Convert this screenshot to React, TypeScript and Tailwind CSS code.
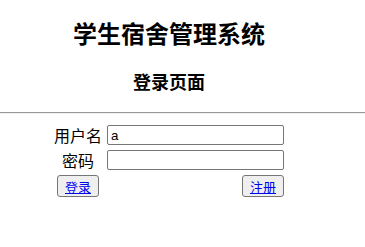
export default function App() {
  const cjk = "font-['Microsoft_YaHei','Noto_Sans_CJK_SC',sans-serif]";
  return (
    <div className={`min-h-[247px] w-[365px] bg-white text-black ${cjk}`}>
      <div className="flex w-[338px] flex-col items-center pt-[21px]">
        <h1 className="text-[24px] font-bold leading-[24px]">学生宿舍管理系统</h1>
        <h2 className="mt-[27px] text-[18px] font-bold leading-[18px]">登录页面</h2>
      </div>
      <hr className="mt-[22px] h-0 border-0 border-t border-b border-t-[#9a9a9a] border-b-[#eeeeee]" />
      <div className="flex w-[338px] justify-center pt-[11px]">
        <form className="grid grid-cols-[48px_177px] gap-x-[5px] gap-y-[5px]">
          <label className="flex h-[20px] items-center justify-center text-[16px] leading-none">用户名</label>
          <input
            type="text"
            defaultValue="a"
            className="h-[20px] w-[177px] rounded-[2px] border border-[#767676] px-[3px] font-['Liberation_Sans',Arial,sans-serif] text-[13.33px] outline-none"
          />
          <label className="flex h-[20px] items-center justify-center text-[16px] leading-none">密码</label>
          <input
            type="password"
            className="h-[20px] w-[177px] rounded-[2px] border border-[#767676] px-[3px] text-[13.33px] outline-none"
          />
          <div className="flex justify-center">
            <button
              type="button"
              className="flex h-[22px] w-[42px] items-center justify-center rounded-[3px] border border-[#767676] bg-[#efefef] text-[13px] leading-none text-[#0000ee] underline"
            >
              登录
            </button>
          </div>
          <div className="flex justify-end">
            <button
              type="button"
              className="flex h-[22px] w-[42px] items-center justify-center rounded-[3px] border border-[#767676] bg-[#efefef] text-[13px] leading-none text-[#0000ee] underline"
            >
              注册
            </button>
          </div>
        </form>
      </div>
    </div>
  );
}
